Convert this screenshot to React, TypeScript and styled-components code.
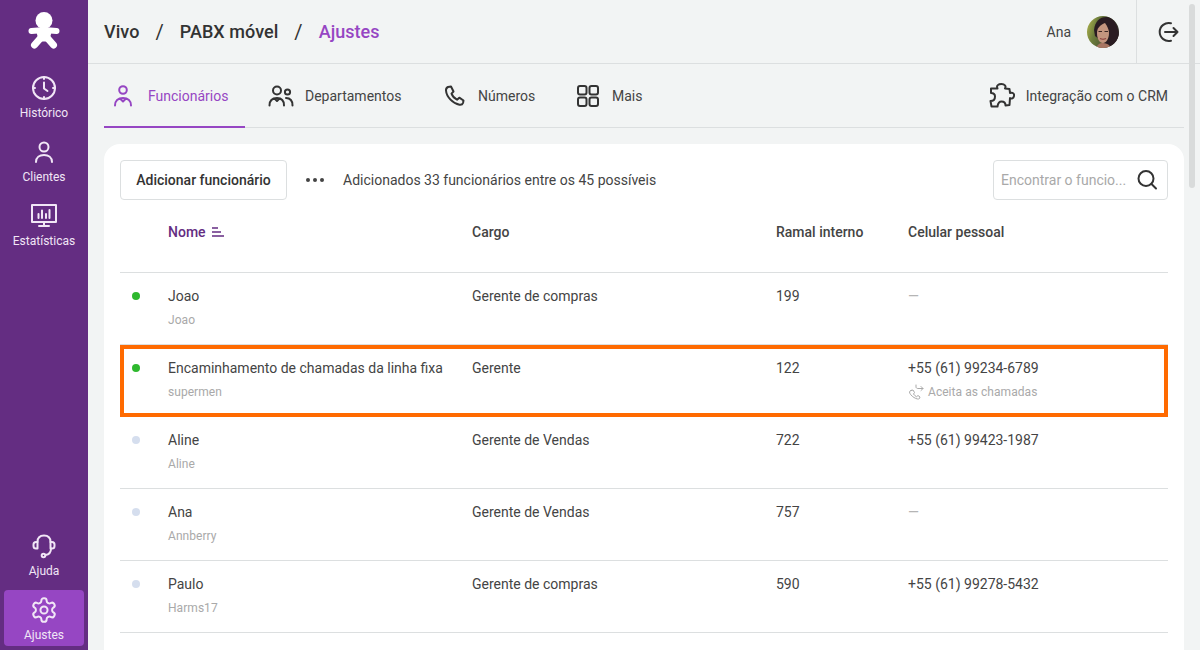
import React from 'react';
import styled, { createGlobalStyle } from 'styled-components';

const Global = createGlobalStyle`
  html, body { margin: 0; padding: 0; height: 650px; overflow: hidden; }
  body { font-family: Roboto, "Liberation Sans", sans-serif; background: #f2f4f4; color: #333; }
  * { box-sizing: border-box; }
`;

const Shell = styled.div`
  display: flex;
  width: 1200px;
  height: 650px;
  overflow: hidden;
  position: relative;
`;

const Sidebar = styled.nav`
  width: 88px;
  flex: none;
  background: #642d82;
  display: flex;
  flex-direction: column;
  align-items: center;
  gap: 8px;
  padding: 12px 4px 4px;
`;

const Logo = styled.div`
  height: 48px;
  flex: none;
`;

const NavItem = styled.a<{ $active?: boolean }>`
  width: 80px;
  height: 56px;
  flex: none;
  border-radius: 4px;
  display: flex;
  flex-direction: column;
  align-items: center;
  padding-top: 7px;
  color: #f1e6f6;
  font-size: 12px;
  line-height: 14px;
  background: ${(p) => (p.$active ? '#9646c3' : 'transparent')};
  svg { display: block; margin-bottom: 5px; flex: none; }
`;

const Spacer = styled.div`
  flex: 1;
`;

const Main = styled.main`
  flex: 1;
  min-width: 0;
  display: flex;
  flex-direction: column;
  padding-right: 16px;
`;

const TopBar = styled.header`
  height: 64px;
  flex: none;
  margin-right: -16px;
  display: flex;
  align-items: center;
  padding-left: 16px;
  border-bottom: 1px solid #dcdfe0;
`;

const Crumbs = styled.div`
  display: flex;
  align-items: center;
  font-size: 18px;
  font-weight: 500;
  letter-spacing: 0.05px;
  color: #333;
  flex: 1;
`;

const Slash = styled.span`
  margin: 0 16px;
  font-weight: 400;
  font-size: 20px;
`;

const CrumbCurrent = styled.span`
  color: #9646c3;
`;

const UserName = styled.span`
  font-size: 14px;
  color: #444;
  margin-right: 16px;
`;

const Avatar = styled.div`
  width: 32px;
  height: 32px;
  border-radius: 50%;
  overflow: hidden;
  margin-right: 17px;
`;

const Logout = styled.div`
  width: 64px;
  height: 63px;
  border-left: 1px solid #dcdfe0;
  display: flex;
  align-items: center;
  padding-left: 20px;
`;

const Tabs = styled.div`
  height: 64px;
  flex: none;
  margin-left: 16px;
  padding-right: 16px;
  display: flex;
  align-items: stretch;
  border-bottom: 1px solid #dcdfe0;
`;

const Tab = styled.a<{ $active?: boolean; $width: number; $offset?: number }>`
  width: ${(p) => p.$width}px;
  margin-left: ${(p) => p.$offset ?? 0}px;
  flex: none;
  display: flex;
  align-items: center;
  font-size: 14px;
  gap: ${(p) => (p.$active ? 12 : 11)}px;
  color: ${(p) => (p.$active ? '#9646c3' : '#444')};
  margin-bottom: -1px;
  padding: 2px 0 0 ${(p) => (p.$active ? 8 : 0)}px;
  border-bottom: 2px solid ${(p) => (p.$active ? '#9646c3' : 'transparent')};
`;

const CrmLink = styled.a`
  margin-left: auto;
  display: flex;
  align-items: center;
  font-size: 14px;
  color: #444;
  gap: 11px;
  padding-top: 1px;
`;

const Card = styled.section`
  margin: 16px 0 0 16px;
  background: #fff;
  border-radius: 16px 16px 0 0;
  padding: 16px 16px 0;
  flex: 1;
`;

const Toolbar = styled.div`
  display: flex;
  align-items: center;
  height: 40px;
`;

const Button = styled.button`
  width: 167px;
  height: 40px;
  border: 1px solid #dcdfe0;
  border-radius: 4px;
  background: #fff;
  font: 500 14px Roboto, sans-serif;
  color: #333;
  padding: 0;
`;

const Dots = styled.div`
  display: flex;
  gap: 3px;
  margin: 0 19px;
  i { width: 4px; height: 4px; border-radius: 50%; background: #444; }
`;

const Info = styled.span`
  font-size: 14px;
  color: #444;
`;

const Search = styled.div`
  margin-left: auto;
  width: 175px;
  height: 40px;
  border: 1px solid #dcdfe0;
  border-radius: 4px;
  display: flex;
  align-items: center;
  justify-content: space-between;
  padding: 0 8px 0 7px;
  font-size: 14px;
  color: #a9a9a9;
`;

const COLUMNS = '48px 304px 304px 132px 1fr';

const HeadRow = styled.div`
  display: grid;
  grid-template-columns: ${COLUMNS};
  height: 73px;
  padding-top: 24px;
  border-bottom: 1px solid #dcdfe0;
  font-size: 14px;
  font-weight: 500;
  line-height: 16px;
  color: #444;
`;

const SortHead = styled.div`
  grid-column: 2;
  display: flex;
  align-items: center;
  gap: 6px;
  height: 16px;
  color: #642d82;
`;

const Row = styled.div<{ $marked?: boolean }>`
  display: grid;
  grid-template-columns: ${COLUMNS};
  height: 72px;
  padding-top: 15px;
  border-bottom: 1px solid #dcdfe0;
  position: relative;
  ${(p) =>
    p.$marked &&
    `&::after {
      content: '';
      position: absolute;
      inset: 0 0 -1px 0;
      border: 4px solid #ff6a00;
    }`}
`;

const DotCell = styled.div`
  padding: 4px 0 0 12px;
`;

const StatusDot = styled.div<{ $online: boolean }>`
  width: 8px;
  height: 8px;
  border-radius: 50%;
  background: ${(p) => (p.$online ? '#2eb82e' : '#d5deee')};
`;

const Primary = styled.div`
  font-size: 14px;
  line-height: 16px;
  color: #444;
`;

const Sub = styled.div`
  display: flex;
  align-items: center;
  gap: 4px;
  margin-top: 8px;
  font-size: 12px;
  line-height: 16px;
  letter-spacing: 0.05px;
  color: #a9a9a9;
`;

const Dash = styled.span`
  color: #b5b5b5;
`;

const Scrollbar = styled.div`
  position: absolute;
  top: 4px;
  right: 5px;
  width: 6px;
  height: 184px;
  border-radius: 3px;
  background: #d9dbdb;
`;

const Ico = ({ size = 24, color = 'currentColor', w = 2, children }: { size?: number; color?: string; w?: number; children: React.ReactNode }) => (
  <svg width={size} height={size} viewBox={`0 0 ${size} ${size}`} fill="none" stroke={color} strokeWidth={w} strokeLinecap="round" strokeLinejoin="round">
    {children}
  </svg>
);

const rows = [
  { on: true, name: 'Joao', nick: 'Joao', role: 'Gerente de compras', ext: '199', phone: '' },
  { on: true, name: 'Encaminhamento de chamadas da linha fixa', nick: 'supermen', role: 'Gerente', ext: '122', phone: '+55 (61) 99234-6789', accepts: true },
  { on: false, name: 'Aline', nick: 'Aline', role: 'Gerente de Vendas', ext: '722', phone: '+55 (61) 99423-1987' },
  { on: false, name: 'Ana', nick: 'Annberry', role: 'Gerente de Vendas', ext: '757', phone: '' },
  { on: false, name: 'Paulo', nick: 'Harms17', role: 'Gerente de compras', ext: '590', phone: '+55 (61) 99278-5432' },
];

export default function App() {
  return (
    <Shell>
      <Global />
      <Sidebar>
        <Logo>
          <svg width="32" height="40" viewBox="0 0 32 40" fill="#fff" stroke="#fff" strokeLinecap="round" strokeLinejoin="round">
            <circle cx="16" cy="8.500" r="8.500" stroke="none" />
            <path d="M3.500 19L16 18L28.500 19" strokeWidth="6" fill="none" />
            <path d="M10 20H22L20 28H12Z" strokeWidth="3" />
            <path d="M13.500 25L6.500 33M18.500 25L25.500 33" strokeWidth="7" fill="none" />
          </svg>
        </Logo>
        <NavItem>
          <Ico size={26} w={2}>
            <circle cx="13" cy="13" r="11" />
            <path d="M13 7.500V13.500L16.500 16M13 2V4M13 22V24M2 13H4M22 13H24" />
          </Ico>
          Histórico
        </NavItem>
        <NavItem>
          <Ico size={26} w={2}>
            <circle cx="13" cy="8" r="4.500" />
            <path d="M5 23C5 18.500 8.500 16 13 16S21 18.500 21 23" />
          </Ico>
          Clientes
        </NavItem>
        <NavItem>
          <Ico size={26} w={2}>
            <rect x="1" y="2" width="24" height="17" />
            <path d="M13 19V23M8 23H18M7.500 15V11M11 15V7.500M15 15V11M18.500 15V7" />
          </Ico>
          Estatísticas
        </NavItem>
        <Spacer />
        <NavItem>
          <Ico size={26} w={2}>
            <path d="M6.500 9C6.500 5 9 2.500 13 2.500S19.500 5 19.500 9" />
            <path d="M6.500 9H5C3.500 9 2.500 10 2.500 11.500V13C2.500 14.500 3.500 15.500 5 15.500H6.500Z" />
            <path d="M19.500 9H21C22.500 9 23.500 10 23.500 11.500V13C23.500 14.500 22.500 15.500 21 15.500H19.500Z" />
            <path d="M20 15.500C20 19 18 21.500 14.500 22" />
            <circle cx="12.500" cy="22.500" r="1.800" />
          </Ico>
          Ajuda
        </NavItem>
        <NavItem $active>
          <svg width="26" height="26" viewBox="1 1 22 22" fill="none" stroke="currentColor" strokeWidth="1.700" strokeLinecap="round" strokeLinejoin="round">
            <path d="M12.220 2h-.44a2 2 0 0 0-2 2v.18a2 2 0 0 1-1 1.730l-.43.25a2 2 0 0 1-2 0l-.15-.08a2 2 0 0 0-2.730.73l-.22.38a2 2 0 0 0 .73 2.730l.15.1a2 2 0 0 1 1 1.720v.51a2 2 0 0 1-1 1.740l-.15.09a2 2 0 0 0-.73 2.730l.22.38a2 2 0 0 0 2.730.73l.15-.08a2 2 0 0 1 2 0l.43.25a2 2 0 0 1 1 1.730V20a2 2 0 0 0 2 2h.44a2 2 0 0 0 2-2v-.18a2 2 0 0 1 1-1.730l.43-.25a2 2 0 0 1 2 0l.15.08a2 2 0 0 0 2.730-.73l.22-.39a2 2 0 0 0-.73-2.730l-.15-.08a2 2 0 0 1-1-1.740v-.5a2 2 0 0 1 1-1.740l.15-.09a2 2 0 0 0 .73-2.730l-.22-.38a2 2 0 0 0-2.730-.73l-.15.08a2 2 0 0 1-2 0l-.43-.25a2 2 0 0 1-1-1.730V4a2 2 0 0 0-2-2z" />
            <circle cx="12" cy="12" r="3" />
          </svg>
          Ajustes
        </NavItem>
      </Sidebar>
      <Main>
        <TopBar>
          <Crumbs>
            Vivo<Slash>/</Slash>PABX móvel<Slash>/</Slash>
            <CrumbCurrent>Ajustes</CrumbCurrent>
          </Crumbs>
          <UserName>Ana</UserName>
          <Avatar>
            <svg width="32" height="32" viewBox="0 0 32 32">
              <defs>
                <linearGradient id="bg" x1="0" y1="0" x2="1" y2="0.300">
                  <stop offset="0" stopColor="#b5b84e" />
                  <stop offset="0.350" stopColor="#6d7d3c" />
                  <stop offset="1" stopColor="#3a3a30" />
                </linearGradient>
                <filter id="soft">
                  <feGaussianBlur stdDeviation="0.600" />
                </filter>
              </defs>
              <rect width="32" height="32" fill="url(#bg)" />
              <g filter="url(#soft)">
                <path d="M7 14C8 5 13 1 19 1C27 1 33 8 33 33H24L8 20Z" fill="#2a1f22" />
                <path d="M10 17C10 12 13 9 18 7C20 10 22 13 22 17C22 23 19 27 16 27C12.500 27 10 23 10 17Z" fill="#c4957e" />
                <path d="M9 33C10 28 13 27 16 27C20 27 23 29 25 33Z" fill="#a87462" />
                <path d="M13 22.500C15 23.500 17 23.500 19 22.500" stroke="#8a3f3c" strokeWidth="1.200" fill="none" />
                <path d="M11.500 15.500H15M17.500 15.500H21" stroke="#3a2622" strokeWidth="1.200" />
              </g>
            </svg>
          </Avatar>
          <Logout>
            <Ico size={24} color="#333" w={2}>
              <path d="M14 3.300A9 9 0 1 0 14 20.700" />
              <path d="M8 12H20.500M16.500 8L20.500 12L16.500 16" />
            </Ico>
          </Logout>
        </TopBar>
        <Tabs>
          <Tab $active $width={141}>
            <Ico size={24} w={2}>
              <circle cx="11" cy="6" r="3.800" />
              <path d="M3 21.500C3 17 6 14 11 14S19 17 19 21.500M8 14.500L11 17.500L14 14.500" />
            </Ico>
            Funcionários
          </Tab>
          <Tab $width={165} $offset={23}>
            <Ico size={26} color="#333" w={2}>
              <circle cx="9" cy="7.500" r="4" />
              <circle cx="19.500" cy="9" r="2.600" />
              <path d="M1.500 22.500C1.500 17.500 4.500 15 9 15S16 17.500 16 22.500M18 15C22 15 24.500 17.500 24.500 22.500M6.500 15.500L9 18L11.500 15.500" />
            </Ico>
            Departamentos
          </Tab>
          <Tab $width={134} $offset={10}>
            <Ico size={24} color="#333" w={2}>
              <path d="M5 3L8 2.500L10.500 7.500L8.500 9.700C9.500 12.300 11.500 14.500 14 15.700L16.300 13.700L20.500 16.500L20 19C19.500 20.500 18 21 16.500 20.800C10 19.500 3.500 13 3 6.500C2.900 5.200 3.600 3.700 5 3Z" />
            </Ico>
            Números
          </Tab>
          <Tab $width={90}>
            <Ico size={24} color="#333" w={2}>
              <rect x="1" y="2" width="8.500" height="8.500" rx="2" />
              <rect x="12.500" y="2" width="8.500" height="8.500" rx="2" />
              <rect x="1" y="13.500" width="8.500" height="8.500" rx="2" />
              <rect x="12.500" y="13.500" width="8.500" height="8.500" rx="2" />
            </Ico>
            Mais
          </Tab>
          <CrmLink>
            <Ico size={26} color="#333" w={2}>
              <path d="M8.500 5.500C7 2.500 9.500 1 12.500 1C15.500 1 17.500 3 16 5.500L20.500 6L21 10C24 9 25.500 11 25 13C24.500 15.500 22.500 16 21 15L20.500 22L16.500 22.500C16.500 19.500 14.500 18.500 12.500 18.500C10.500 18.500 9 20 8.500 23.500L2.500 23.500L1.500 18C4.500 18 6 16 6 13.500C6 11.500 4.500 10 2 10L2 5.500Z" />
            </Ico>
            Integração com o CRM
          </CrmLink>
        </Tabs>
        <Card>
          <Toolbar>
            <Button>Adicionar funcionário</Button>
            <Dots>
              <i />
              <i />
              <i />
            </Dots>
            <Info>Adicionados 33 funcionários entre os 45 possíveis</Info>
            <Search>
              Encontrar o funcio...
              <Ico size={24} color="#333" w={2}>
                <circle cx="11" cy="10.500" r="7.500" />
                <path d="M16.500 16L21 20.500" />
              </Ico>
            </Search>
          </Toolbar>
          <HeadRow>
            <SortHead>
              Nome
              <svg width="12" height="10" viewBox="0 0 12 10" stroke="#642d82" strokeWidth="1.500">
                <path d="M0 1H6M0 5H9M0 9H12" />
              </svg>
            </SortHead>
            <div>Cargo</div>
            <div>Ramal interno</div>
            <div>Celular pessoal</div>
          </HeadRow>
          {rows.map((r) => (
            <Row key={r.name} $marked={r.accepts}>
              <DotCell>
                <StatusDot $online={r.on} />
              </DotCell>
              <div>
                <Primary>{r.name}</Primary>
                <Sub>{r.nick}</Sub>
              </div>
              <Primary>{r.role}</Primary>
              <Primary>{r.ext}</Primary>
              <div>
                <Primary>{r.phone || <Dash>—</Dash>}</Primary>
                {r.accepts && (
                  <Sub>
                    <Ico size={16} color="#a9a9a9" w={1}>
                      <path d="M3 6.500L5 6L6.500 8.500L5.500 10C6.300 11.300 7.300 12 8.500 12.700L10 11.500L12 13L11.500 14.500C10.500 15.500 8.500 15 6 13.500C3.500 12 1.500 9.500 1.500 8C1.500 7.300 2.200 6.800 3 6.500Z" />
                      <path d="M8 1V3C8 4 9 4.500 10 4.500H15M13 2.500L15 4.500L13 6.500" />
                    </Ico>
                    Aceita as chamadas
                  </Sub>
                )}
              </div>
            </Row>
          ))}
        </Card>
      </Main>
      <Scrollbar />
    </Shell>
  );
}
